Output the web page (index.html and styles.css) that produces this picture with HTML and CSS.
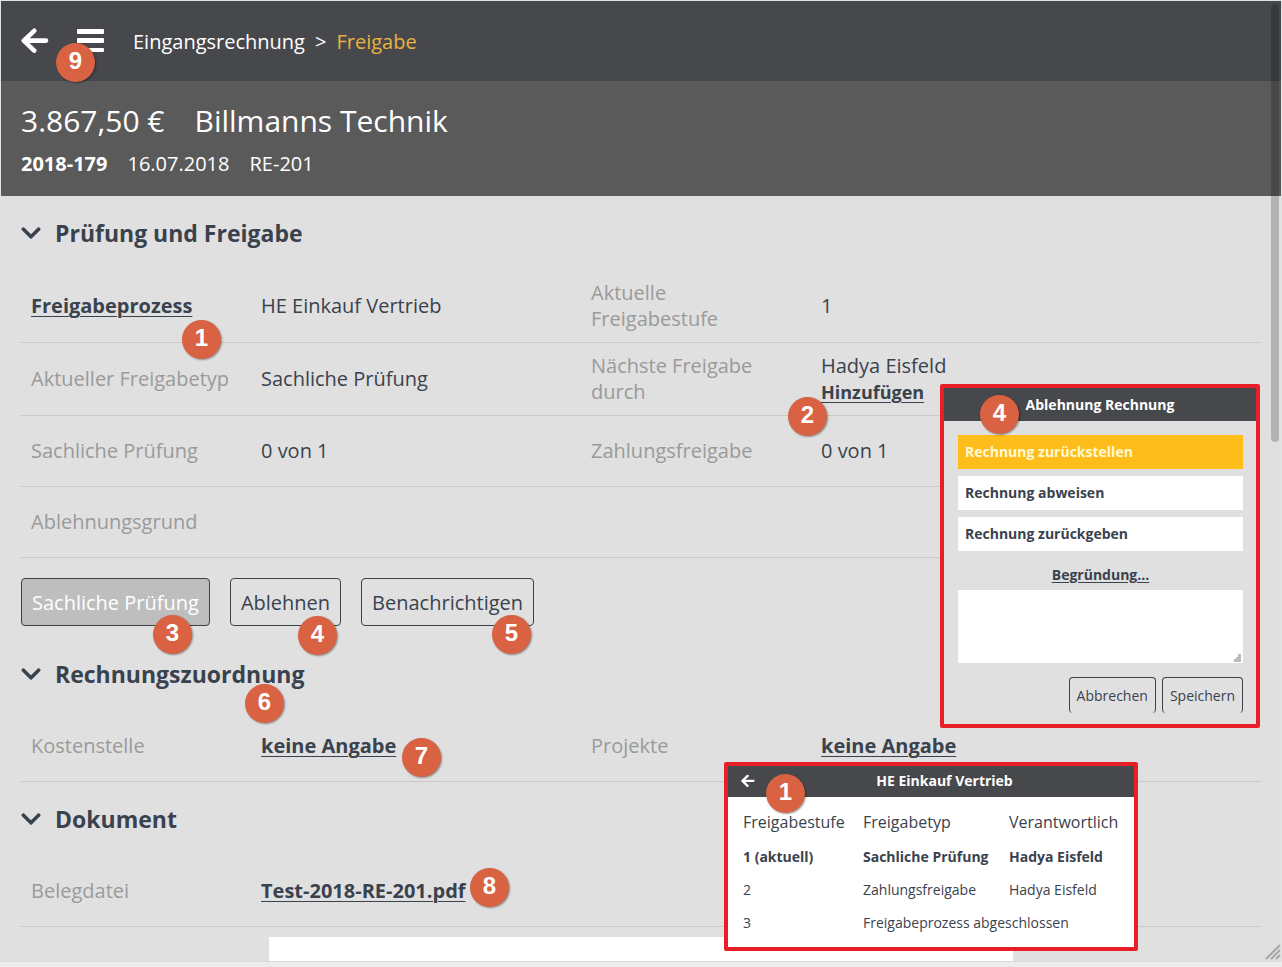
FILE: index.html
```html
<!DOCTYPE html>
<html lang="de">
<head>
<meta charset="utf-8">
<meta name="viewport" content="width=device-width, initial-scale=1">
<title>Eingangsrechnung – Freigabe</title>
<link rel="stylesheet" href="styles.css">
</head>
<body>
<svg class="defs" aria-hidden="true">
  <symbol id="chevron" viewBox="0 120 448 272"><path d="M207 381.500L12.700 187.100c-9.400-9.400-9.400-24.600 0-33.900l22.700-22.700c9.400-9.400 24.500-9.400 33.900 0L224 284.500l154.700-154c9.400-9.300 24.500-9.300 33.900 0l22.700 22.700c9.400 9.400 9.400 24.600 0 33.900L241 381.500c-9.400 9.400-24.600 9.400-34 0z"/></symbol>
  <symbol id="arrow" viewBox="0 0 28 28"><path d="M13.200 3.800L2.800 13.600L13.200 23.600M3.500 13.600H25" fill="none" stroke="currentColor" stroke-width="4.600" stroke-linecap="round" stroke-linejoin="round"/></symbol>
</svg>
<div class="window">
  <header class="topbar">
    <button class="icon-btn" aria-label="Zurück"><svg class="icon-lg"><use href="#arrow"/></svg></button>
    <button class="icon-btn" aria-label="Menü"><svg class="icon-lg" viewBox="0 0 28 28"><rect y="2" width="27" height="5" rx="1"/><rect y="11" width="27" height="5" rx="1"/><rect y="21" width="27" height="4" rx="1"/></svg></button>
    <nav class="crumbs" aria-label="Pfad"><a href="#">Eingangsrechnung</a><span>&gt;</span><span class="current">Freigabe</span></nav>
  </header>
  <div class="summary">
    <h1 class="summary-title"><span>3.867,50 €</span><span>Billmanns Technik</span></h1>
    <p class="summary-meta"><b>2018-179</b><span>16.07.2018</span><span>RE-201</span></p>
  </div>
  <main class="content">
    <section>
      <h2 class="section-title"><svg class="chevron"><use href="#chevron"/></svg>Prüfung und Freigabe</h2>
      <div class="row"><div><a href="#">Freigabeprozess</a></div><div>HE Einkauf Vertrieb</div><div class="label">Aktuelle Freigabestufe</div><div>1</div></div>
      <div class="row"><div class="label">Aktueller Freigabetyp</div><div>Sachliche Prüfung</div><div class="label">Nächste Freigabe durch</div><div>Hadya Eisfeld<br><a class="add" href="#">Hinzufügen</a></div></div>
      <div class="row"><div class="label">Sachliche Prüfung</div><div>0 von 1</div><div class="label">Zahlungsfreigabe</div><div>0 von 1</div></div>
      <div class="row"><div class="label">Ablehnungsgrund</div></div>
      <div class="actions">
        <button class="btn btn-active">Sachliche Prüfung</button>
        <button class="btn">Ablehnen</button>
        <button class="btn">Benachrichtigen</button>
      </div>
    </section>
    <section>
      <h2 class="section-title"><svg class="chevron"><use href="#chevron"/></svg>Rechnungszuordnung</h2>
      <div class="row"><div class="label">Kostenstelle</div><div><a href="#">keine Angabe</a></div><div class="label">Projekte</div><div><a href="#">keine Angabe</a></div></div>
    </section>
    <section>
      <h2 class="section-title"><svg class="chevron"><use href="#chevron"/></svg>Dokument</h2>
      <div class="row"><div class="label">Belegdatei</div><div><a href="#">Test-2018-RE-201.pdf</a></div></div>
      <div class="preview"></div>
    </section>
  </main>
  <div class="scroll-thumb"></div>
  <svg class="grip" viewBox="0 0 16 16"><path d="M1 15L15 1M6 15l9-9M11 15l4-4"/></svg>

  <form class="popup reject">
    <h2 class="popup-title">Ablehnung Rechnung</h2>
    <div class="reject-body">
      <button type="button" class="option option-selected">Rechnung zurückstellen</button>
      <button type="button" class="option">Rechnung abweisen</button>
      <button type="button" class="option">Rechnung zurückgeben</button>
      <label class="reason-label" for="reason">Begründung...</label>
      <div class="reason-box"><textarea id="reason" class="reason"></textarea><svg class="reason-grip" viewBox="0 0 7 8"><path d="M0 8V5h2V3h2V0h3v8z"/></svg></div>
      <div class="reject-actions"><button type="button" class="btn-sm">Abbrechen</button><button type="button" class="btn-sm">Speichern</button></div>
    </div>
  </form>

  <section class="popup process">
    <header class="process-head"><button class="icon-btn" aria-label="Zurück"><svg class="icon-sm"><use href="#arrow"/></svg></button><h2>HE Einkauf Vertrieb</h2></header>
    <table class="steps">
      <thead><tr><th>Freigabestufe</th><th>Freigabetyp</th><th>Verantwortlich</th></tr></thead>
      <tbody>
        <tr class="now"><td>1 (aktuell)</td><td>Sachliche Prüfung</td><td>Hadya Eisfeld</td></tr>
        <tr><td>2</td><td>Zahlungsfreigabe</td><td>Hadya Eisfeld</td></tr>
        <tr><td>3</td><td colspan="2">Freigabeprozess abgeschlossen</td></tr>
      </tbody>
    </table>
  </section>

  <span class="pin pin-menu">9</span>
  <span class="pin pin-process">1</span>
  <span class="pin pin-next">2</span>
  <span class="pin pin-check">3</span>
  <span class="pin pin-reject">4</span>
  <span class="pin pin-notify">5</span>
  <span class="pin pin-assign">6</span>
  <span class="pin pin-cost">7</span>
  <span class="pin pin-file">8</span>
  <span class="pin pin-popup-reject">4</span>
  <span class="pin pin-popup-process">1</span>
</div>
</body>
</html>
```
FILE: styles.css
```css
* { box-sizing: border-box; }
body {
  margin: 0;
  background: #ececec;
  color: #3a424e;
  font: 20px/26px "Open Sans", "Noto Sans", sans-serif;
}
h1, h2, p { margin: 0; }
button { font: inherit; color: inherit; cursor: pointer; }
a { color: inherit; font-weight: 700; text-underline-offset: 3px; text-decoration-thickness: 1px; }
.defs { display: none; }

.window {
  position: relative;
  background: #e0e0e0;
  border: 1px solid #dfe3e3;
  border-bottom: 0;
  box-shadow: 0 1px 5px #ccc;
}
.topbar {
  display: flex;
  align-items: center;
  gap: 28px;
  height: 80px;
  padding: 0 20px;
  background: #47484c;
  color: #fff;
}
.icon-btn { display: flex; padding: 0; border: 0; background: none; color: #fff; }
.icon-lg { width: 28px; height: 28px; fill: currentColor; }
.icon-sm { width: 14px; height: 14px; fill: currentColor; }
.crumbs { display: flex; gap: 10px; padding-top: 2px; }
.crumbs a { font-weight: 400; text-decoration: none; }
.crumbs .current { color: #e9b240; }

.summary { padding: 20px 20px 19px; background: #5a5a5a; color: #fff; }
.summary-title { display: flex; gap: 30px; font-size: 30px; font-weight: 400; line-height: 40px; }
.summary-meta { display: flex; gap: 20px; padding-top: 10px; line-height: 26px; }

.content { padding: 0 20px; }
.section-title {
  display: flex;
  align-items: center;
  gap: 14px;
  height: 74px;
  font-size: 23px;
  line-height: 32px;
}
.chevron { width: 20px; height: 12px; fill: currentColor; }
.row {
  display: grid;
  grid-template-columns: 230px 330px 230px 1fr;
  align-items: center;
  min-height: 71px;
  padding: 10px 0;
  border-bottom: 1px solid #c9c9c9;
}
.row > div { padding: 0 10px; }
.row > .label { padding-right: 20px; color: #9a9a9a; }
.add { font-size: 18px; }
.actions { display: flex; gap: 20px; padding: 20px 0 11px; }
.btn {
  height: 48px;
  padding: 1px 10px 0;
  border: 1px solid #3a424e;
  border-radius: 4px;
  background: none;
}
.btn-active { background: #bebebe; color: #fff; }
.preview { width: 60%; height: 24px; margin: 10px 0 1px 20%; background: #fff; }

.scroll-thumb {
  position: absolute;
  top: 3px;
  right: 2px;
  width: 8px;
  height: 438px;
  border-radius: 4px;
  background: rgba(0, 0, 0, .2);
}
.grip { position: absolute; right: 0; bottom: 1px; width: 16px; height: 16px; stroke: #a6a6a6; stroke-width: 2; fill: none; }

.popup { position: absolute; border: 4px solid #e81f27; border-radius: 2px; font-size: 14px; line-height: 20px; }
.reject { top: 383px; right: 21px; width: 320px; background: #e0e0e0; }
.popup-title { padding: 6px; background: #47484c; color: #fff; font-size: 14px; line-height: 21px; text-align: center; }
.reject-body { display: flex; flex-direction: column; gap: 7px; padding: 14px 13px 11px 14px; }
.option { height: 34px; padding: 0 7px; border: 0; background: #fff; font-weight: 700; text-align: left; }
.option-selected { background: #ffbd1b; color: #fff9d8; }
.reason-label { padding-top: 8px; font-weight: 700; line-height: 17px; text-align: center; text-decoration: underline; text-underline-offset: 2px; }
.reason-box { position: relative; display: flex; }
.reason { width: 100%; height: 73px; border: 0; resize: none; background: #fff; font: inherit; }
.reason-grip { position: absolute; right: 2px; bottom: 1px; width: 7px; height: 8px; fill: #bbb; }
.reject-actions { display: flex; justify-content: flex-end; gap: 6px; padding-top: 7px; }
.btn-sm { height: 36px; padding: 0 7px; border: 1px solid #3a424e; border-bottom: 0; border-radius: 4px; background: none; }

.process { top: 761px; right: 143px; width: 414px; background: #fff; }
.process-head { display: flex; align-items: center; padding: 4px 14px 6px 13px; background: #47484c; color: #fff; }
.process-head h2 { flex: 1; padding-left: 14px; font-size: 14px; line-height: 21px; text-align: center; }
.steps { width: 100%; padding: 7px 12px 8px; border-spacing: 0; table-layout: fixed; font-size: 14px; }
.steps th { height: 36px; padding: 0 3px; font-size: 16px; font-weight: 400; text-align: left; }
.steps th:first-child { width: 120px; }
.steps th:nth-child(2) { width: 146px; }
.steps td { height: 33px; padding: 0 3px; white-space: nowrap; }
.now { font-weight: 700; }

.pin {
  position: absolute;
  width: 39px;
  height: 39px;
  border-radius: 50%;
  background: #d96243;
  box-shadow: 1px 1px 2px rgba(0, 0, 0, .4);
  color: #fff;
  font: 700 24px/36px "Liberation Sans", Arial, sans-serif;
  text-align: center;
}
.pin-menu { left: 55px; top: 42px; }
.pin-process { left: 181px; top: 319px; }
.pin-next { left: 787px; top: 396px; }
.pin-check { left: 152px; top: 614px; }
.pin-reject { left: 297px; top: 615px; }
.pin-notify { left: 491px; top: 614px; }
.pin-assign { left: 244px; top: 683px; }
.pin-cost { left: 401px; top: 737px; }
.pin-file { left: 469px; top: 867px; }
.pin-popup-reject { right: 262px; top: 394px; }
.pin-popup-process { right: 476px; top: 773px; }
```
